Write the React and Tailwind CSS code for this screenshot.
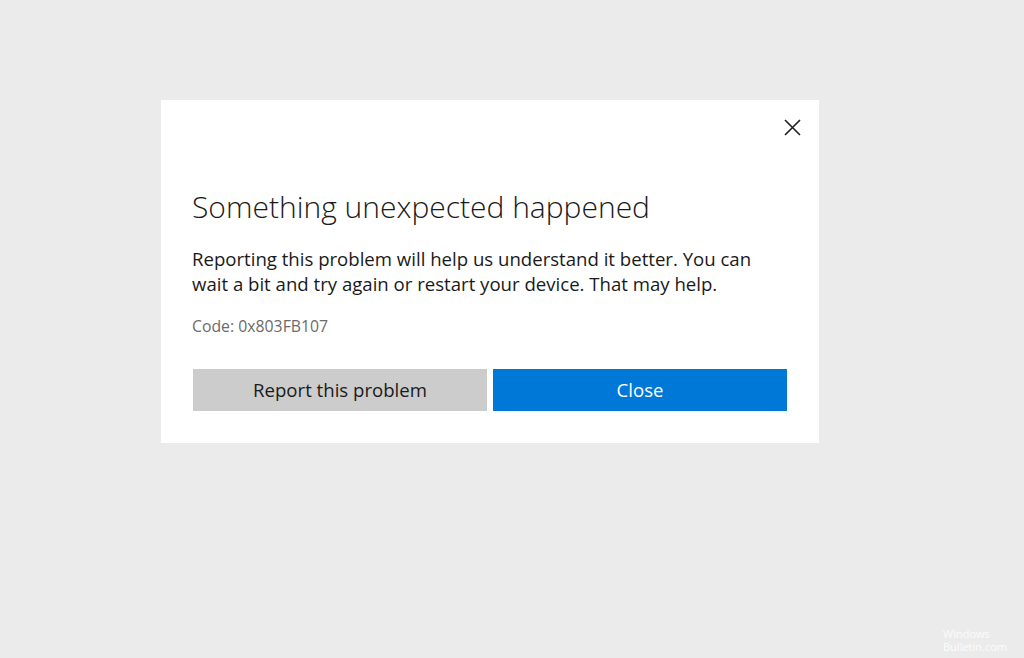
import React from "react";

function CloseIcon() {
  return (
    <svg width="17" height="17" viewBox="0 0 17 17" fill="none">
      <path d="M1 1L16 16M16 1L1 16" stroke="#1f1f1f" strokeWidth="1.6" />
    </svg>
  );
}

export default function App() {
  return (
    <div
      className="relative w-[1024px] h-[658px] bg-[#ebebeb] overflow-hidden pt-[100px] pl-[161px]"
      style={{ fontFamily: '"Open Sans", "Noto Sans", sans-serif' }}
    >
      <div className="w-[658px] h-[343px] bg-white flex flex-col">
        <div className="flex justify-end pt-[19px] pr-[18px]">
          <button className="w-[17px] h-[17px] flex items-center justify-center">
            <CloseIcon />
          </button>
        </div>
        <div className="pl-[31px] pr-[31px] pt-[53px]">
          <h1 className="text-[30px] leading-[36px] font-light text-[#1a1a1a]">
            Something unexpected happened
          </h1>
          <p className="mt-[21px] w-[575px] text-[18.6px] leading-[25px] text-[#1a1a1a]">
            Reporting this problem will help us understand it better. You can
            wait a bit and try again or restart your device. That may help.
          </p>
          <p className="mt-[20px] text-[15.8px] leading-[20px] text-[#6b6b6b]">
            Code: 0x803FB107
          </p>
          <div className="mt-[33px] ml-[1px] flex gap-[6px]">
            <button className="w-[294px] h-[42px] bg-[#cccccc] text-[#1a1a1a] text-[18.6px]">
              Report this problem
            </button>
            <button className="w-[294px] h-[42px] bg-[#0078d7] text-white text-[18.6px]">
              Close
            </button>
          </div>
        </div>
      </div>
      <div className="absolute left-[943px] bottom-[5px] text-[11px] leading-[13px] text-white/80">
        <div>Windows</div>
        <div>Bulletin.com</div>
      </div>
    </div>
  );
}
